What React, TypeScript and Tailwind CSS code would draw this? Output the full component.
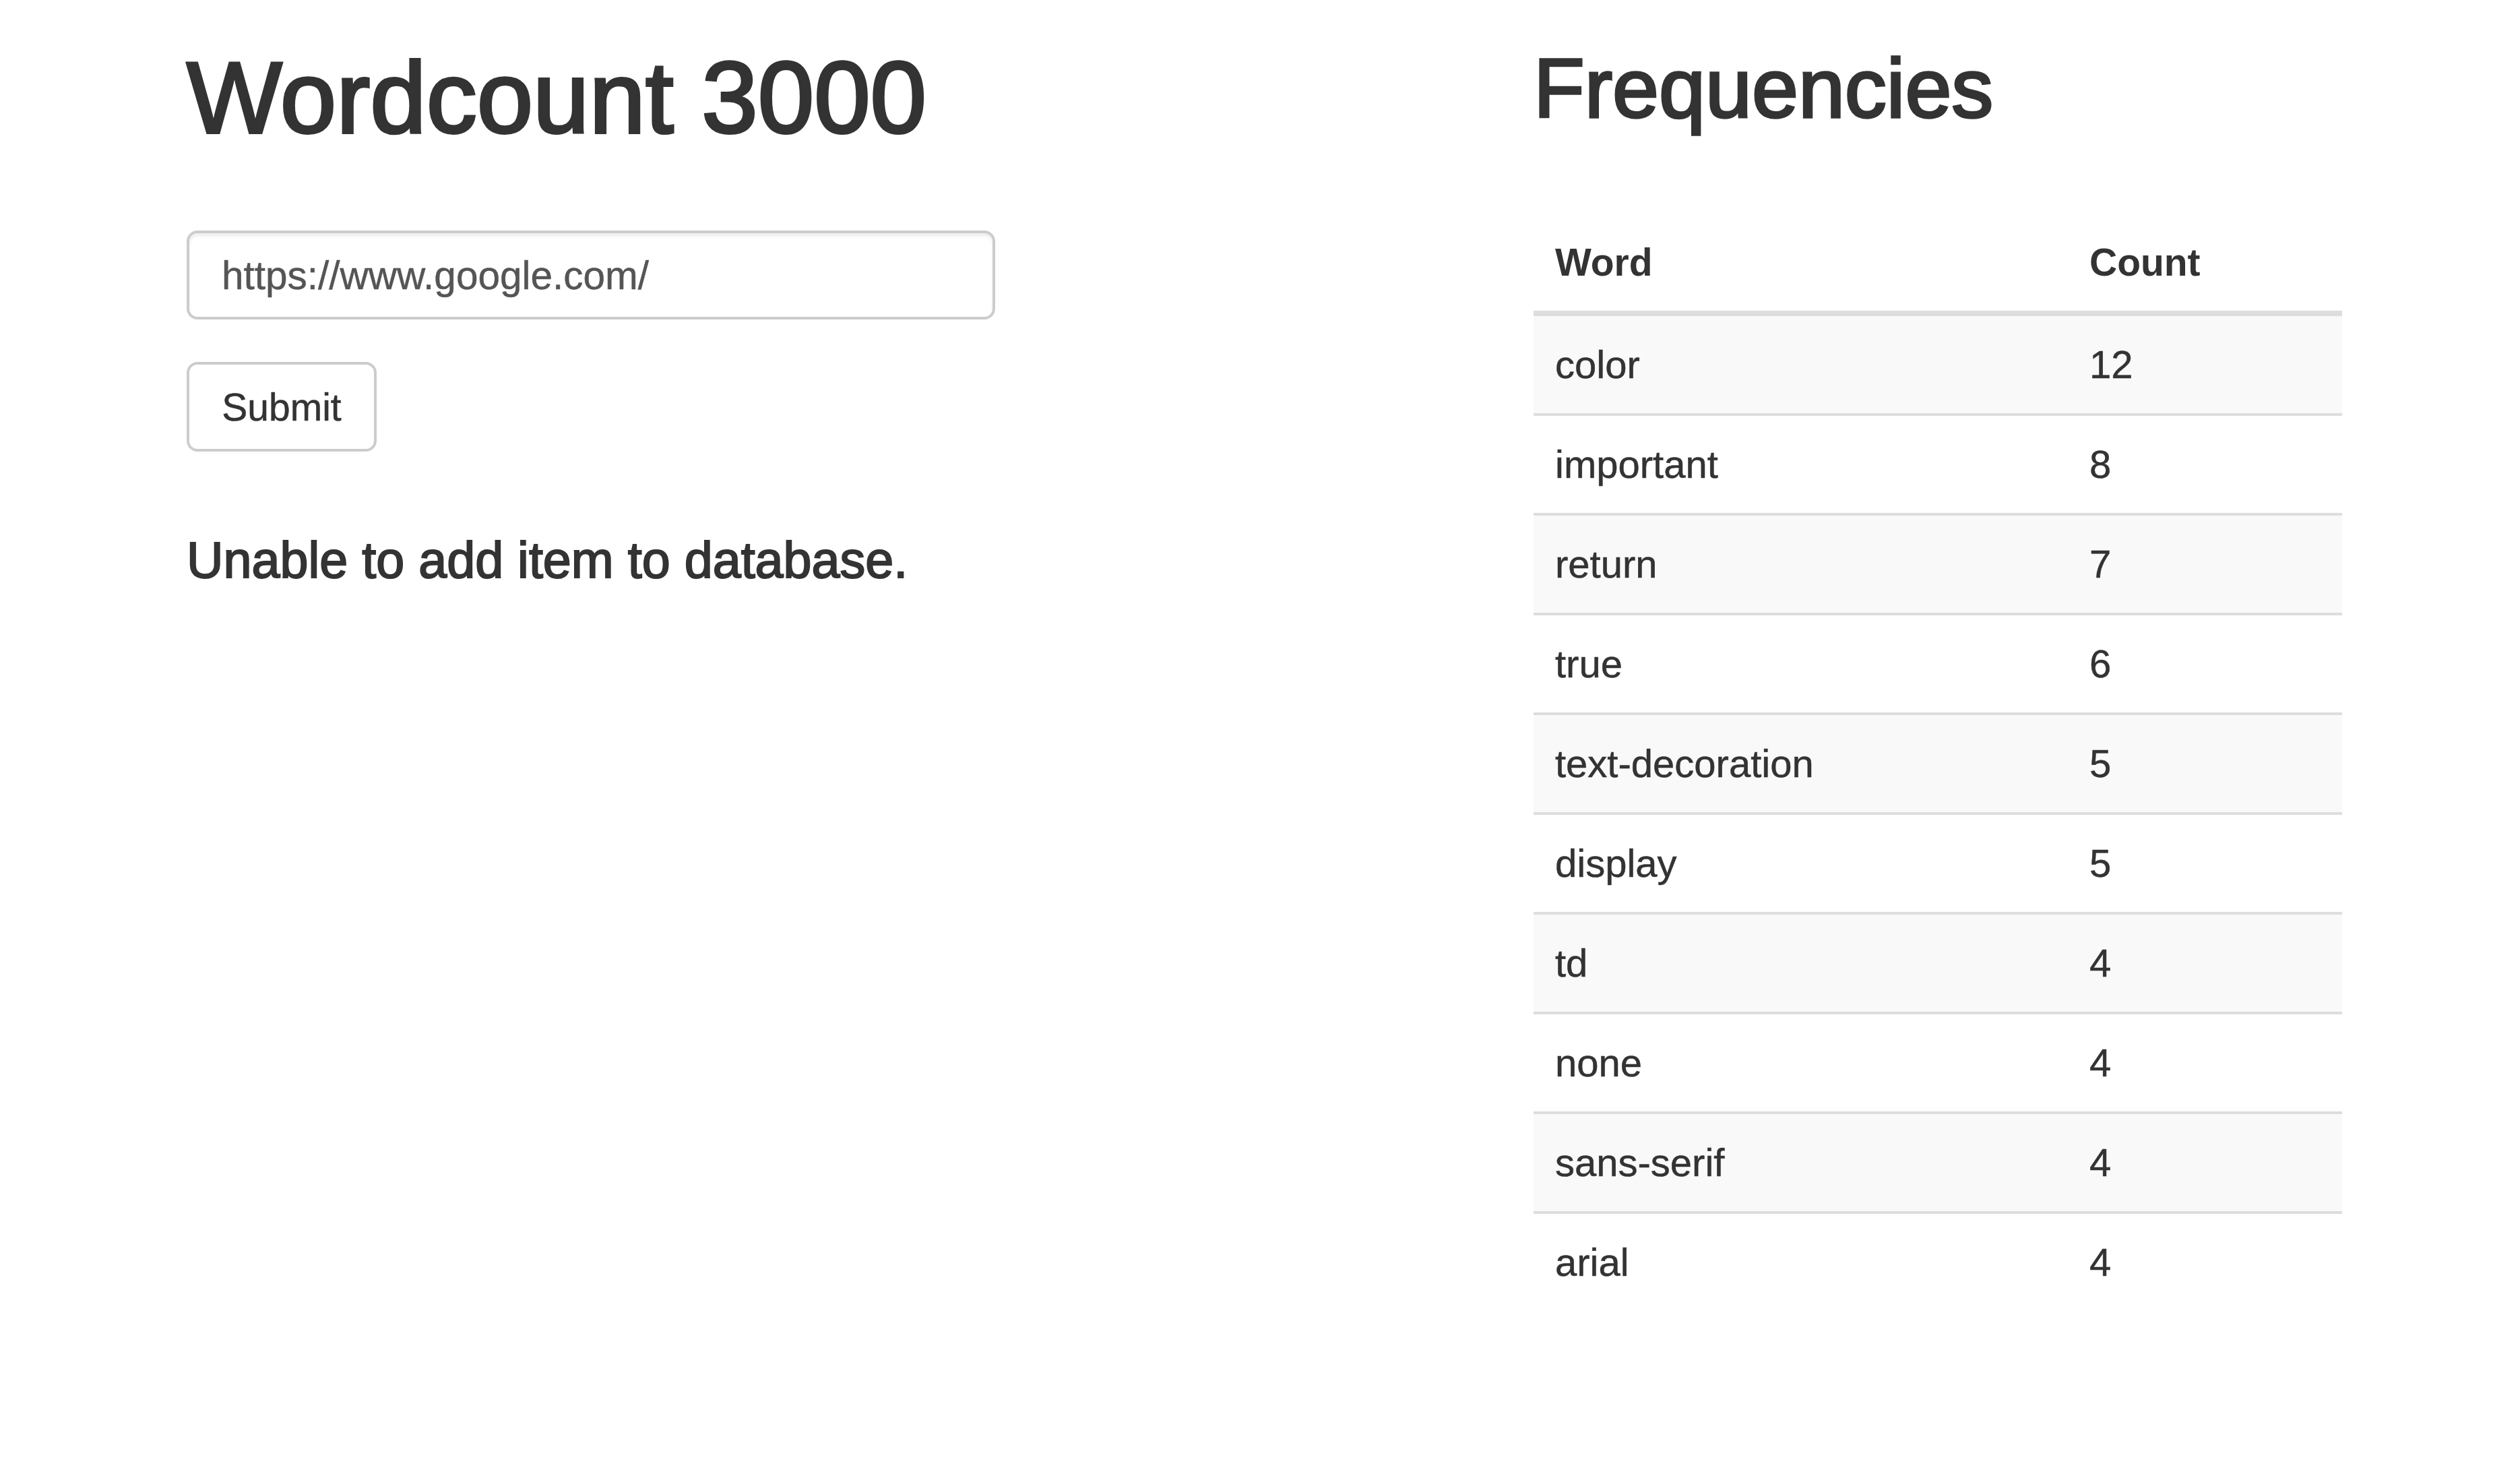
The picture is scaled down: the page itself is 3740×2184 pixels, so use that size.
import React from "react";

const rows: [string, number][] = [
  ["color", 12],
  ["important", 8],
  ["return", 7],
  ["true", 6],
  ["text-decoration", 5],
  ["display", 5],
  ["td", 4],
  ["none", 4],
  ["sans-serif", 4],
  ["arial", 4],
];

export default function App() {
  return (
    <div className="min-h-screen bg-white text-[#333] font-['Liberation_Sans',Arial,sans-serif]">
      <div className="flex">
        <div className="ml-[277px] w-[1200px] flex flex-col items-start">
          <h1 className="mt-[64px] text-[150px] leading-[163px] font-normal [-webkit-text-stroke:4px_#333]">
            Wordcount 3000
          </h1>
          <input
            readOnly
            value="https://www.google.com/"
            className="mt-[115px] h-[132px] w-[1200px] rounded-[16px] border-[4px] border-[#ccc] bg-white px-[48px] text-[58.5px] text-[#555] outline-none shadow-[inset_0_4px_4px_rgba(0,0,0,0.075)] font-['Liberation_Sans',Arial,sans-serif] [-webkit-text-stroke:0.5px_#555]"
          />
          <button className="mt-[63px] h-[133px] w-[282px] rounded-[16px] border-[4px] border-[#ccc] bg-white text-[57px] leading-[80px] text-[#333] font-['Liberation_Sans',Arial,sans-serif] [-webkit-text-stroke:0.5px_#333]">
            Submit
          </button>
          <p className="mt-[121px] text-[75.5px] leading-[81px] [-webkit-text-stroke:2px_#333]">
            Unable to add item to database.
          </p>
        </div>
        <div className="ml-[799px] w-[1200px] flex flex-col items-start">
          <h2 className="mt-[63px] text-[124px] leading-[136px] font-normal [-webkit-text-stroke:3.5px_#333]">
            Frequencies
          </h2>
          <table className="mt-[118px] w-[1200px] border-collapse text-left">
            <thead>
              <tr>
                <th className="w-[793px] border-b-[8px] border-[#ddd] p-[32px] text-[57px] leading-[80px] font-bold">
                  Word
                </th>
                <th className="border-b-[8px] border-[#ddd] p-[32px] text-[57px] leading-[80px] font-bold">
                  Count
                </th>
              </tr>
            </thead>
            <tbody>
              {rows.map(([w, c], i) => (
                <tr key={w} className={i % 2 === 0 ? "bg-[#f9f9f9]" : "bg-white"}>
                  <td className="border-t-[4px] border-[#ddd] p-[32px] text-[58px] leading-[80px] [-webkit-text-stroke:0.5px_#333]">
                    {w}
                  </td>
                  <td className="border-t-[4px] border-[#ddd] p-[32px] text-[58px] leading-[80px] [-webkit-text-stroke:0.5px_#333]">
                    {c}
                  </td>
                </tr>
              ))}
            </tbody>
          </table>
        </div>
      </div>
    </div>
  );
}
